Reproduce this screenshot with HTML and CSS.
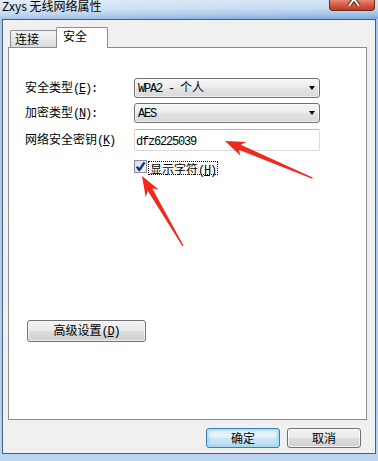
FILE: index.html
```html
<!DOCTYPE html>
<html lang="zh-CN">
<head>
<meta charset="utf-8">
<title>Zxys 无线网络属性</title>
<link rel="stylesheet" href="styles.css">
</head>
<body>
<div class="window">
  <div class="titlebar">
    <span class="title">Zxys 无线网络属性</span>
    <div class="close">
      <svg width="14" height="7" viewBox="0 0 14 7"><polyline points="2,7 7,0 12,7" fill="none" stroke="#5a2018" stroke-width="4"/><polyline points="2,7 7,0 12,7" fill="none" stroke="#fff" stroke-width="2"/></svg>
    </div>
  </div>
  <div class="client">
    <div class="tabs">
      <div class="tab">连接</div>
      <div class="tab active">安全</div>
    </div>
    <div class="page">
      <div class="form">
        <div class="lbl">安全类型<span class="en">(<u>E</u>):</span></div>
        <div class="combo"><span class="val"><span class="en">WPA2 - </span>个人</span><span class="drop"></span></div>
        <div class="lbl">加密类型<span class="en">(<u>N</u>):</span></div>
        <div class="combo"><span class="val"><span class="en">AES</span></span><span class="drop"></span></div>
        <div class="lbl">网络安全密钥<span class="en">(<u>K</u>)</span></div>
        <div class="textbox"><span class="en">dfz6225039</span></div>
      </div>
      <div class="check-row">
        <div class="checkbox">
          <svg width="11" height="11" viewBox="0 0 11 11"><path d="M1.8 5.6 L4.3 9 L9.5 1.3" fill="none" stroke="#1b2f86" stroke-width="2.4" stroke-linejoin="round"/></svg>
        </div>
        <div class="check-label">显示字符<span class="en">(<u>H</u>)</span></div>
      </div>
      <button class="btn adv">高级设置<span class="en">(<u>D</u>)</span></button>
    </div>
    <div class="footer">
      <button class="btn default">确定</button>
      <button class="btn">取消</button>
    </div>
  </div>
</div>
<svg class="arrows" width="378" height="461" viewBox="0 0 378 461">
  <g transform="translate(225 141) rotate(23)" fill="#f3281c">
    <polygon points="0,0 20,-7.5 16,-2.6 95,-0.6 95,0.6 16,2.6 20,7.5"/>
  </g>
  <g transform="translate(142 176) rotate(59.6)" fill="#f3281c">
    <polygon points="0,0 20,-7.5 16,-2.6 81,-0.6 81,0.6 16,2.6 20,7.5"/>
  </g>
</svg>
</body>
</html>
```

FILE: styles.css
```css
html, body {
  margin: 0;
  padding: 0;
}

body {
  width: 378px;
  height: 461px;
  overflow: hidden;
  position: relative;
  background: linear-gradient(to bottom, #a9c8ea 0%, #b4d0ef 90%, #bcd6f2 100%);
  font-family: "Noto Sans CJK SC", sans-serif;
  font-size: 12px;
  color: #000;
}

.window {
  width: 378px;
  height: 461px;
}

.titlebar {
  height: 19px;
  display: flex;
  justify-content: space-between;
  align-items: flex-start;
  background:
    linear-gradient(to right, rgba(255,255,255,0.35) 0%, rgba(255,255,255,0.15) 50%, rgba(255,255,255,0) 100%),
    linear-gradient(to bottom, #d2e3f5 0%, #c3d9f1 45%, #a2c3e9 75%, #7aa8dd 100%);
}

.title {
  margin-left: 2px;
  line-height: 12px;
  font-size: 12px;
  white-space: nowrap;
}

.close {
  box-sizing: border-box;
  width: 46px;
  height: 11px;
  margin-right: 3px;
  border: 1px solid #6b2c22;
  border-top: none;
  border-radius: 0 0 4px 4px;
  background: linear-gradient(to bottom, #e58a74 0%, #d45a40 50%, #c13b22 100%);
  display: flex;
  justify-content: center;
  align-items: flex-start;
}

.close svg {
  display: block;
  margin-top: -1px;
  margin-left: 4px;
}

.client {
  box-sizing: border-box;
  height: 435px;
  margin: 0 2px;
  border: 1px solid #4a6077;
  background: #f0f0f0;
  padding: 7px 8px 0 5px;
}

.tabs {
  display: flex;
  align-items: flex-end;
  height: 20px;
  margin-left: 2px;
}

.tab {
  box-sizing: border-box;
  height: 17px;
  width: 46px;
  border: 1px solid #898c95;
  border-bottom: none;
  border-right: none;
  border-radius: 2px 0 0 0;
  background: linear-gradient(to bottom, #f5f5f5 0%, #e9e9e9 50%, #d9d9d9 100%);
  padding-left: 4px;
  line-height: 15px;
  white-space: nowrap;
}

.tab.active {
  height: 21px;
  width: 52px;
  border-right: 1px solid #898c95;
  border-radius: 2px 2px 0 0;
  background: #fff;
  position: relative;
  z-index: 1;
  margin-bottom: -1px;
  padding-left: 6px;
  line-height: 16px;
}

.page {
  box-sizing: border-box;
  height: 373px;
  border: 1px solid #898c95;
  background: #fff;
  padding: 30px 0 0 16px;
}

.en {
  font-family: "Liberation Mono", monospace;
  font-size: 12px;
  letter-spacing: -1.2px;
}

.form {
  display: grid;
  grid-template-columns: 109px 186px;
  grid-template-rows: 20px 20px 23px;
  row-gap: 5px;
  align-items: center;
}

.lbl {
  line-height: 19px;
  white-space: nowrap;
}

.combo {
  box-sizing: border-box;
  height: 20px;
  border: 1px solid #707070;
  border-radius: 3px;
  background: linear-gradient(to bottom, #f6f6f6 0%, #ededed 45%, #e2e2e2 55%, #d8d8d8 100%);
  box-shadow: inset 0 0 0 1px rgba(255,255,255,0.6);
  display: flex;
  align-items: center;
  justify-content: space-between;
  padding: 0 4px 0 3px;
}

.val {
  line-height: 18px;
  white-space: nowrap;
}

.drop {
  width: 0;
  height: 0;
  border-top: 4px solid #000;
  border-left: 3.5px solid transparent;
  border-right: 3.5px solid transparent;
}

.textbox {
  box-sizing: border-box;
  height: 22px;
  align-self: end;
  border: 1px solid #dadada;
  border-top-color: #b8b8b8;
  border-radius: 2px;
  background: #fff;
  padding: 0 1px;
  line-height: 19px;
}

.check-row {
  display: flex;
  align-items: flex-start;
  margin: 9px 0 0 109px;
  height: 14px;
}

.checkbox {
  box-sizing: border-box;
  width: 13px;
  height: 13px;
  border: 1px solid #8e8f8f;
  background: linear-gradient(to bottom right, #cfe0f1 0%, #e4eef8 60%, #f4f8fc 100%);
  display: flex;
  align-items: center;
  justify-content: center;
}

.checkbox svg {
  display: block;
}

.check-label {
  margin-left: 1px;
  margin-top: 1px;
  border: 1px dotted #000;
  padding: 0 1px;
  height: 12px;
  line-height: 13px;
  white-space: nowrap;
}

.btn {
  box-sizing: border-box;
  font-family: "Noto Sans CJK SC", sans-serif;
  font-size: 12px;
  color: #000;
  border: 1px solid #707070;
  border-radius: 3px;
  background: linear-gradient(to bottom, #f2f2f2 0%, #ebebeb 49%, #dddddd 50%, #cfcfcf 100%);
  box-shadow: inset 0 0 0 1px rgba(255,255,255,0.7);
  padding: 0;
  margin: 0;
  line-height: 18px;
  white-space: nowrap;
}

.adv {
  display: block;
  width: 119px;
  height: 22px;
  margin: 146px 0 0 2px;
}

.footer {
  display: flex;
  justify-content: flex-end;
  gap: 7px;
  margin-top: 8px;
  padding-right: 6px;
}

.footer .btn {
  width: 74px;
  height: 20px;
}

.btn.default {
  border-color: #3c7fb1;
  background: linear-gradient(to bottom, #eef7fc 0%, #e0f0f9 49%, #cde7f5 50%, #bfe0f2 100%);
  box-shadow: inset 0 0 0 1px #a8dcf6, inset 0 0 3px 2px rgba(120,200,240,0.5);
}

.arrows {
  position: absolute;
  left: 0;
  top: 0;
  pointer-events: none;
}
```
